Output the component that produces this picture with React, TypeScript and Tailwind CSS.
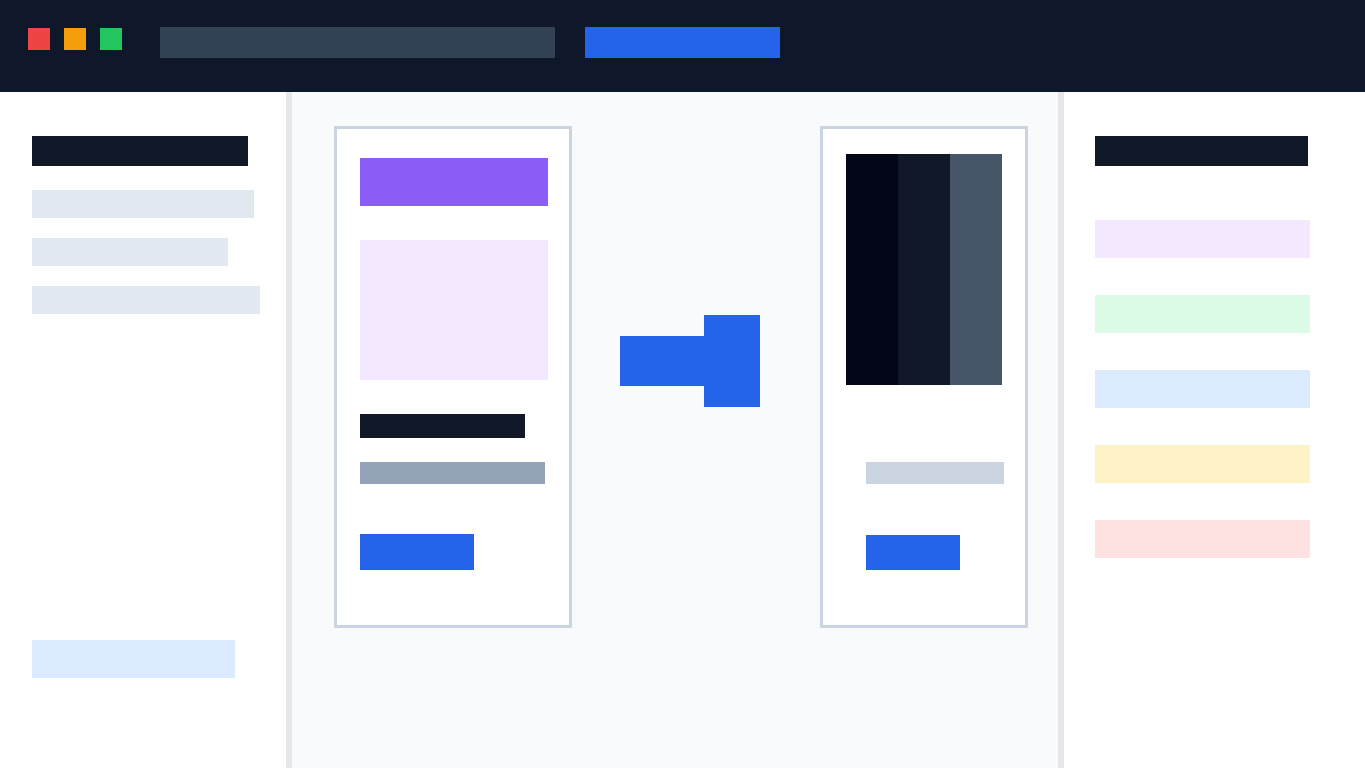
const LEFT_NAV = [
  { w: "w-[222px]" },
  { w: "w-[196px]" },
  { w: "w-[228px]" },
] as const

const RIGHT_SWATCHES = [
  "bg-[#f3e8ff]",
  "bg-[#dcfce7]",
  "bg-[#dbeafe]",
  "bg-[#fef3c7]",
  "bg-[#fee2e2]",
] as const

function TopBar() {
  return (
    <header className="flex h-[92px] shrink-0 items-start bg-[#0f172a]">
      <div className="mt-[28px] ml-[28px] flex gap-[14px]">
        <span className="h-[22px] w-[22px] bg-[#ef4444]" />
        <span className="h-[22px] w-[22px] bg-[#f59e0b]" />
        <span className="h-[22px] w-[22px] bg-[#22c55e]" />
      </div>
      <div className="mt-[27px] ml-[38px] h-[31px] w-[395px] bg-[#334155]" />
      <div className="mt-[27px] ml-[30px] h-[31px] w-[195px] bg-[#2563eb]" />
    </header>
  )
}

function LeftSidebar() {
  return (
    <aside className="flex w-[292px] shrink-0 flex-col border-r-[6px] border-[#e5e7eb] bg-white pt-[44px] pb-[90px] pl-[32px]">
      <div className="h-[30px] w-[216px] bg-[#111827]" />
      <div className="mt-[24px] flex flex-col gap-[20px]">
        {LEFT_NAV.map(({ w }, i) => (
          <div key={i} className={`h-[28px] bg-[#e2e8f0] ${w}`} />
        ))}
      </div>
      <div className="mt-auto h-[38px] w-[203px] bg-[#dbeafe]" />
    </aside>
  )
}

function SourceCard() {
  return (
    <div className="flex h-[502px] w-[238px] shrink-0 flex-col border-[3px] border-[#cbd5e1] bg-white pt-[29px] pl-[23px]">
      <div className="h-[48px] w-[188px] bg-[#8b5cf6]" />
      <div className="mt-[34px] h-[140px] w-[188px] bg-[#f3e8ff]" />
      <div className="mt-[34px] h-[24px] w-[165px] bg-[#111827]" />
      <div className="mt-[24px] h-[22px] w-[185px] bg-[#94a3b8]" />
      <div className="mt-[50px] h-[36px] w-[114px] bg-[#2563eb]" />
    </div>
  )
}

function Arrow() {
  return (
    <div className="mt-[189px] ml-[48px] flex shrink-0 items-center">
      <div className="h-[50px] w-[84px] bg-[#2563eb]" />
      <div className="h-[92px] w-[56px] bg-[#2563eb]" />
    </div>
  )
}

function ResultCard() {
  return (
    <div className="ml-[60px] flex h-[502px] w-[208px] shrink-0 flex-col border-[3px] border-[#cbd5e1] bg-white pt-[25px] pl-[23px]">
      <div className="flex h-[231px] w-[156px]">
        <div className="flex-1 bg-[#020617]" />
        <div className="flex-1 bg-[#111827]" />
        <div className="flex-1 bg-[#475569]" />
      </div>
      <div className="mt-[77px] ml-[20px] h-[22px] w-[138px] bg-[#cbd5e1]" />
      <div className="mt-[51px] ml-[20px] h-[35px] w-[94px] bg-[#2563eb]" />
    </div>
  )
}

function RightSidebar() {
  return (
    <aside className="flex flex-1 flex-col border-l-[6px] border-[#e5e7eb] bg-white pt-[44px] pl-[31px]">
      <div className="h-[30px] w-[213px] bg-[#111827]" />
      <div className="mt-[54px] flex flex-col gap-[37px]">
        {RIGHT_SWATCHES.map((c) => (
          <div key={c} className={`h-[38px] w-[215px] ${c}`} />
        ))}
      </div>
    </aside>
  )
}

export default function App() {
  return (
    <div className="flex h-screen w-full flex-col overflow-hidden bg-white font-['Liberation_Sans',sans-serif]">
      <TopBar />
      <div className="flex min-h-0 flex-1">
        <LeftSidebar />
        <main className="flex w-[766px] shrink-0 items-start bg-[#f8fafc] pt-[34px] pl-[42px]">
          <SourceCard />
          <Arrow />
          <ResultCard />
        </main>
        <RightSidebar />
      </div>
    </div>
  )
}
